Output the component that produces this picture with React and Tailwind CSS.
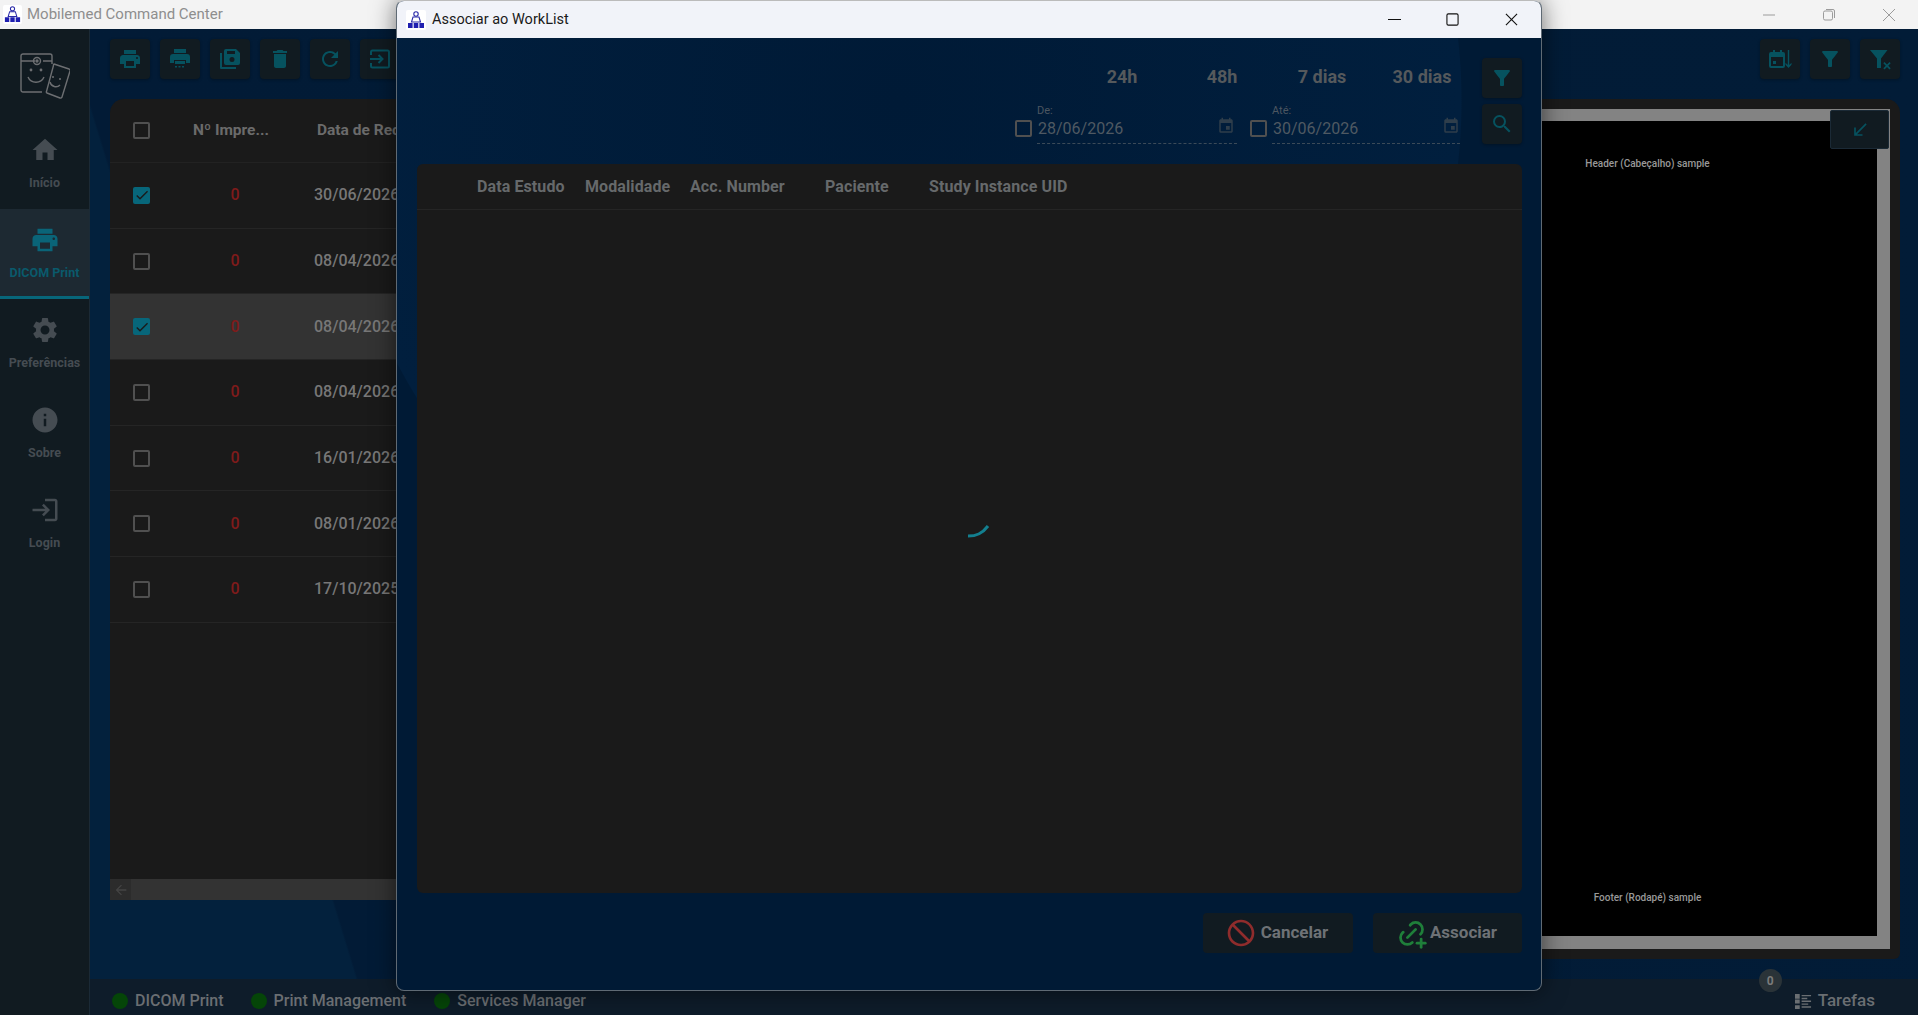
import {
  MdPrint, MdDelete, MdRefresh, MdFilterAlt, MdEvent, MdSearch, MdSouthWest,
  MdHome, MdSettings, MdInfo, MdLogin, MdCheck, MdArrowBack, MdDoNotDisturb,
} from 'react-icons/md';
import { TbLinkPlus } from 'react-icons/tb';

const font = { fontFamily: 'Roboto, "Liberation Sans", sans-serif' };

const rows = [
  { date: '30/06/2026', checked: true },
  { date: '08/04/2026' },
  { date: '08/04/2026', checked: true, active: true },
  { date: '08/04/2026' },
  { date: '16/01/2026' },
  { date: '08/01/2026' },
  { date: '17/10/2025' },
];

const navItems = [
  { label: 'Início', icon: MdHome },
  { label: 'DICOM Print', icon: MdPrint, active: true },
  { label: 'Preferências', icon: MdSettings },
  { label: 'Sobre', icon: MdInfo },
  { label: 'Login', icon: MdLogin },
];

const AppGlyph = ({ className }) => (
  <svg viewBox="0 0 20 20" className={className}>
    <rect width="20" height="20" rx="2" fill="#fff" />
    <circle cx="10" cy="4" r="2.200" fill="none" stroke="#2a2aa8" strokeWidth="1.100" />
    <path d="M5.500 12 L7 7 H13 L14.500 12 Z" fill="none" stroke="#2a2aa8" strokeWidth="1.100" />
    <path d="M2 13h4.600v5H2zM7.700 13h4.600v5H7.700zM13.400 13H18v5h-4.600z" fill="#1f1fb0" />
  </svg>
);

const Logo = () => (
  <svg viewBox="0 0 50 46" className="w-[50px] h-[46px]" fill="none" stroke="#6d6f72" strokeWidth="1.400">
    <path d="M22 39H3a2 2 0 0 1-2-2V3a2 2 0 0 1 2-2h27a2 2 0 0 1 2 2v8" />
    <path d="M1 8h14M23 8h9" />
    <circle cx="17" cy="8" r="3.500" />
    <circle cx="17" cy="8" r="1" fill="#6d6f72" />
    <circle cx="11" cy="17" r="1.400" fill="#6d6f72" stroke="none" />
    <circle cx="21" cy="17" r="1.400" fill="#6d6f72" stroke="none" />
    <path d="M8 24c3 7 13 7 16 0" />
    <path d="M34 11l15 5a1.500 1.500 0 0 1 1 2l-8 26a1.500 1.500 0 0 1-2 1l-13-5a1 1 0 0 1-.5-1.500l7-26a1.500 1.500 0 0 1 .5-1.500z" />
    <circle cx="33" cy="24" r="1" fill="#6d6f72" stroke="none" />
    <circle cx="40" cy="26" r="1" fill="#6d6f72" stroke="none" />
    <path d="M30 29c1 5 7 6 10 3" />
  </svg>
);

const StackedSave = ({ className }) => (
  <svg viewBox="0 0 24 24" className={className} fill="currentColor">
    <path d="M4 6H2v15a1 1 0 0 0 1 1h15v-2H4z" />
    <path d="M18 2H8a2 2 0 0 0-2 2v12a2 2 0 0 0 2 2h12a2 2 0 0 0 2-2V6zm-4 13a2.500 2.500 0 1 1 0-5 2.500 2.500 0 0 1 0 5zm3-8H9V4h8z" />
  </svg>
);

const PrintDots = ({ className }) => (
  <svg viewBox="0 0 24 24" className={className} fill="currentColor">
    <path d="M19 7H5a3 3 0 0 0-3 3v6h4v-3h12v3h4v-6a3 3 0 0 0-3-3zm-1-5H6v4h12z" />
    <path d="M7 14h10v3H7zM7 19h2v1.500H7zM10.500 19h2v1.500h-2zM14 19h2v1.500h-2z" />
  </svg>
);

const EnterBox = ({ className }) => (
  <svg viewBox="0 0 24 24" className={className} fill="none" stroke="currentColor" strokeWidth="2">
    <path d="M3 8V5a1.500 1.500 0 0 1 1.500-1.500h15A1.500 1.500 0 0 1 21 5v14a1.500 1.500 0 0 1-1.500 1.500h-15A1.500 1.500 0 0 1 3 19v-3" />
    <path d="M2 12h12M10.500 8l4 4-4 4" />
  </svg>
);

const SortDate = ({ className }) => (
  <svg viewBox="0 0 24 24" className={className} fill="currentColor">
    <path d="M5 3h2v2h5V3h2v2h1a2 2 0 0 1 2 2v12a2 2 0 0 1-2 2H3a2 2 0 0 1-2-2V7a2 2 0 0 1 2-2h2zM3 10v9h12v-9z" />
    <path d="M5 14h3v3H5zM19.800 3h1.400v15l2.300-2.300v2L20.500 21l-3-3.300v-2l2.300 2.300z" />
  </svg>
);

const FilterClear = ({ className }) => (
  <svg viewBox="0 0 24 24" className={className} fill="currentColor">
    <path d="M2 3h17.500l-6.500 8.500V21h-4v-9.500z" />
    <path d="M16.500 15l2.500 2.500 2.500-2.500 1.200 1.200-2.500 2.500 2.500 2.500-1.200 1.200-2.500-2.500-2.500 2.500-1.200-1.200 2.500-2.500-2.500-2.500z" />
  </svg>
);

const TaskList = ({ className }) => (
  <svg viewBox="0 0 18 18" className={className} fill="currentColor">
    <path d="M0 1h5v5H0zM0 7h5v4H0zM0 13h5v4H0zM7 2h10v1.500H7zM7 5h6v1.500H7zM7 8h10v1.500H7zM7 11h7v1.500H7zM7 14h10v1.500H7z" />
  </svg>
);

const ToolButton = ({ icon: Icon, size = 'w-6 h-6' }) => (
  <button className="w-10 h-10 flex items-center justify-center rounded bg-[#111b21] text-[#06525f] shadow-[0_1px_3px_rgba(0,0,0,0.3)]">
    <Icon className={size} />
  </button>
);

const Checkbox = ({ checked }) =>
  checked ? (
    <span className="shrink-0 w-[17px] h-[17px] flex items-center justify-center rounded-[2px] bg-[#07667a] text-[#1a1a1a]">
      <MdCheck className="w-4 h-4" />
    </span>
  ) : (
    <span className="block shrink-0 w-[17px] h-[17px] rounded-[2px] border-2 border-[#505050]" />
  );

const DateField = ({ label, value, className, iconClass }) => (
  <div className={`relative h-10 border-b border-dashed border-[#3b4a58] ${className}`}>
    <div className="text-[11px] leading-[14px] text-[#4c5660]">{label}</div>
    <div className="pl-[1px] text-[16px] leading-[22px] text-[#4f5962]">{value}</div>
    <MdEvent className={`absolute top-[13px] w-[18px] h-[18px] text-[#2f3e4b] ${iconClass}`} />
  </div>
);

export default function App() {
  return (
    <div style={font} className="relative w-screen h-screen overflow-hidden flex flex-col bg-[#03203c]">
      {/* janela principal */}
      <div className="h-[29px] shrink-0 flex items-center bg-[#f3f3f3] pl-[3px]">
        <AppGlyph className="w-[19px] h-[19px]" />
        <span className="ml-[5px] text-[15px] text-[#8e8e8e]">Mobilemed Command Center</span>
        <div className="ml-auto flex items-center text-[#9b9b9b]">
          <svg viewBox="0 0 14 14" className="w-[14px] h-[14px] mr-[46px]" stroke="currentColor" fill="none"><path d="M1 7h12" /></svg>
          <svg viewBox="0 0 14 14" className="w-[14px] h-[14px] mr-[46px]" stroke="currentColor" fill="none"><rect x="1.500" y="3" width="9" height="9" rx="1.500" /><path d="M4 1.500h7a1.500 1.500 0 0 1 1.500 1.500v7" /></svg>
          <svg viewBox="0 0 14 14" className="w-[14px] h-[14px] mr-[22px]" stroke="currentColor" fill="none"><path d="M1 1l12 12M13 1L1 13" /></svg>
        </div>
      </div>

      <div className="flex-1 flex min-h-0">
        <aside className="w-[90px] shrink-0 bg-[#111b21] border-r border-[#1b2a36] flex flex-col">
          <div className="h-[90px] flex items-center justify-center pt-[4px]">
            <Logo />
          </div>
          {navItems.map(({ label, icon: Icon, active }) => (
            <div
              key={label}
              className={`h-[90px] pb-[3px] flex flex-col items-center justify-center gap-[10px] text-[12.500px] font-bold ${
                active ? 'bg-[#1d2932] shadow-[inset_0_-3px_0_#07667a] text-[#0a5a6c]' : 'text-[#454c52]'
              }`}
            >
              <Icon className={`w-[30px] h-[30px] ${active ? 'text-[#0a6478]' : 'text-[#454c52]'}`} />
              <span className="leading-[15px]">{label}</span>
            </div>
          ))}
        </aside>

        <main className="flex-1 min-w-0 flex flex-col bg-[linear-gradient(73deg,#03213d_13%,#021b36_13.100%,#021c37_100%)]">
          <div className="h-[70px] shrink-0 pt-[10px] pl-[20px] pr-[18px] flex justify-between">
            <div className="flex gap-[10px]">
              <ToolButton icon={MdPrint} />
              <ToolButton icon={PrintDots} />
              <ToolButton icon={StackedSave} />
              <ToolButton icon={MdDelete} />
              <ToolButton icon={MdRefresh} />
              <ToolButton icon={EnterBox} />
            </div>
            <div className="flex gap-[10px]">
              <ToolButton icon={SortDate} />
              <ToolButton icon={MdFilterAlt} />
              <ToolButton icon={FilterClear} />
            </div>
          </div>

          <div className="flex-1 min-h-0 flex gap-[20px] pl-[20px] pr-[18px]">
            {/* tabela de impressoes */}
            <div className="w-[890px] h-[801px] flex flex-col bg-[#1a1a1a] rounded-tl-[14px] overflow-hidden">
              <div className="h-[64px] shrink-0 flex items-center border-b border-[#222] text-[15.500px] font-bold text-[#6b6b6b]">
                <span className="w-[83px] pl-[23px]"><Checkbox /></span>
                <span className="w-[124px]">Nº Impre...</span>
                <span>Data de Recebimento</span>
              </div>
              <div className="flex-1">
                {rows.map((row, i) => (
                  <div
                    key={i}
                    className={`h-[65.700px] flex items-center border-b border-[#252525] text-[16px] font-medium ${
                      row.active ? 'bg-[#333333]' : ''
                    }`}
                  >
                    <span className="w-[83px] pl-[23px] flex"><Checkbox checked={row.checked} /></span>
                    <span className="w-[84px] text-center text-[#7f1b1b]">0</span>
                    <span className="ml-[37px] text-[#777]">{row.date}</span>
                  </div>
                ))}
              </div>
              <div className="h-[21px] shrink-0 bg-[#333] flex">
                <span className="w-[21px] flex items-center justify-center bg-[#2c2c2c] text-[#444]">
                  <MdArrowBack className="w-4 h-4" />
                </span>
              </div>
            </div>

            {/* preview da pagina */}
            <div className="flex-1 h-[860px] bg-[#1a1a1a] rounded-tr-[14px] rounded-br-[6px] p-[10px] flex justify-end">
              <div className="relative w-[485px] h-full bg-[#838383] border-t-[12px] border-r-[13px] border-b-[13px] border-l-[13px] border-[#838383]">
                <div className="h-full bg-black flex flex-col justify-between items-center text-[10px] font-medium text-[#999] pt-[35px] pb-[31px]">
                  <span>Header (Cabeçalho) sample</span>
                  <span>Footer (Rodapé) sample</span>
                </div>
                <button className="absolute -top-[11px] -right-[12px] w-[59px] h-[39px] flex items-center justify-center bg-[#111b21] border border-[#1b2a36] rounded-[2px] text-[#06525f]">
                  <MdSouthWest className="w-5 h-5" />
                </button>
              </div>
            </div>
          </div>

          <footer className="h-[36px] shrink-0 bg-[#0e1c2a] flex items-center pt-[8px] pl-[22px] pr-[43px] text-[16px] font-medium text-[#6a6e72]">
            <span className="w-4 h-4 rounded-full bg-[#054508]" />
            <span className="ml-[7px]">DICOM Print</span>
            <span className="ml-[27px] w-4 h-4 rounded-full bg-[#054508]" />
            <span className="ml-[7px]">Print Management</span>
            <span className="ml-[28px] w-4 h-4 rounded-full bg-[#054508]" />
            <span className="ml-[7px]">Services Manager</span>
            <div className="relative ml-auto flex items-center gap-[6px] text-[17px] font-medium">
              <TaskList className="w-[17px] h-[17px]" />
              <span>Tarefas</span>
              <span className="absolute -top-[19px] -left-[36px] w-[23px] h-[23px] rounded-full bg-[#2a3338] flex items-center justify-center text-[12px] font-bold text-[#7b7b7b]">0</span>
            </div>
          </footer>
        </main>
      </div>

      {/* janela modal Associar ao WorkList */}
      <section className="absolute left-[396px] top-0 w-[1146px] h-[991px] flex flex-col rounded-[8px] overflow-hidden border border-[#5f6a74] border-t-[#bbb] shadow-[0_0_24px_rgba(0,0,0,0.55)] bg-[radial-gradient(circle_at_500px_100px,#001a36_0,#011f3e_564px,#001a35_565px)]">
        <div className="h-[37px] shrink-0 flex items-center bg-[#f1f3f9] pl-[9px]">
          <AppGlyph className="w-[20px] h-[20px]" />
          <span className="ml-[6px] text-[14.500px] text-[#1a1a1a]">Associar ao WorkList</span>
          <div className="ml-auto flex items-center text-[#111]">
            <svg viewBox="0 0 14 14" className="w-[13px] h-[13px] mr-[45px]" stroke="currentColor" strokeWidth="1.200" fill="none"><path d="M0 7h14" /></svg>
            <svg viewBox="0 0 14 14" className="w-[13px] h-[13px] mr-[46px]" stroke="currentColor" strokeWidth="1.200" fill="none"><rect x="1" y="1" width="12" height="12" rx="1.500" /></svg>
            <svg viewBox="0 0 14 14" className="w-[13px] h-[13px] mr-[23px]" stroke="currentColor" strokeWidth="1.200" fill="none"><path d="M1 1l12 12M13 1L1 13" /></svg>
          </div>
        </div>

        <div className="flex-1 min-h-0 flex flex-col pl-[20px] pr-[19px] pt-[20px] pb-[37px]">
          <div className="h-[86px] shrink-0 flex justify-end gap-[10px]">
            <div className="flex flex-col gap-[6px]">
              <div className="h-10 pb-[4px] flex justify-end text-[18px] font-bold text-[#55595c]">
                {['24h', '48h', '7 dias', '30 dias'].map((t) => (
                  <span key={t} className="w-[100px] flex items-center justify-center">{t}</span>
                ))}
              </div>
              <div className="h-10 flex justify-end pr-[12px]">
                <span className="mt-[16px] mr-[5px]"><Checkbox /></span>
                <DateField label="De:" value="28/06/2026" className="w-[200px]" iconClass="right-[2px]" />
                <span className="mt-[16px] ml-[13px] mr-[5px]"><Checkbox /></span>
                <DateField label="Até:" value="30/06/2026" className="w-[188px]" iconClass="right-0" />
              </div>
            </div>
            <div className="flex flex-col gap-[6px]">
              <ToolButton icon={MdFilterAlt} />
              <ToolButton icon={MdSearch} />
            </div>
          </div>

          <div className="relative flex-1 mt-[20px] bg-[#1a1a1a] rounded-[6px]">
            <div className="h-[46px] flex items-center pl-[60px] border-b border-[#252525] text-[16px] tracking-[0.1px] font-bold text-[#66696b]">
              <span className="w-[108px]">Data Estudo</span>
              <span className="w-[105px]">Modalidade</span>
              <span className="w-[135px]">Acc. Number</span>
              <span className="w-[104px]">Paciente</span>
              <span>Study Instance UID</span>
            </div>
            <svg viewBox="0 0 24 14" className="absolute left-[549px] top-[360px] w-6 h-[14px]" fill="none">
              <path d="M2 12c8 0 14-2 20-10" stroke="#137f8f" strokeWidth="3" />
            </svg>
          </div>

          <div className="h-10 mt-[20px] shrink-0 flex justify-end gap-[20px] text-[17px] font-bold text-[#6e7276]">
            <button className="w-[150px] pr-[3px] flex items-center justify-center gap-[4px] rounded bg-[#111b21]">
              <MdDoNotDisturb className="w-[32px] h-[32px] text-[#8f2c2c]" />
              Cancelar
            </button>
            <button className="w-[149px] pr-[3px] flex items-center justify-center gap-[2px] rounded bg-[#111b21]">
              <TbLinkPlus className="w-[33px] h-[33px] text-[#1f7f3a]" />
              Associar
            </button>
          </div>
        </div>
      </section>
    </div>
  );
}
